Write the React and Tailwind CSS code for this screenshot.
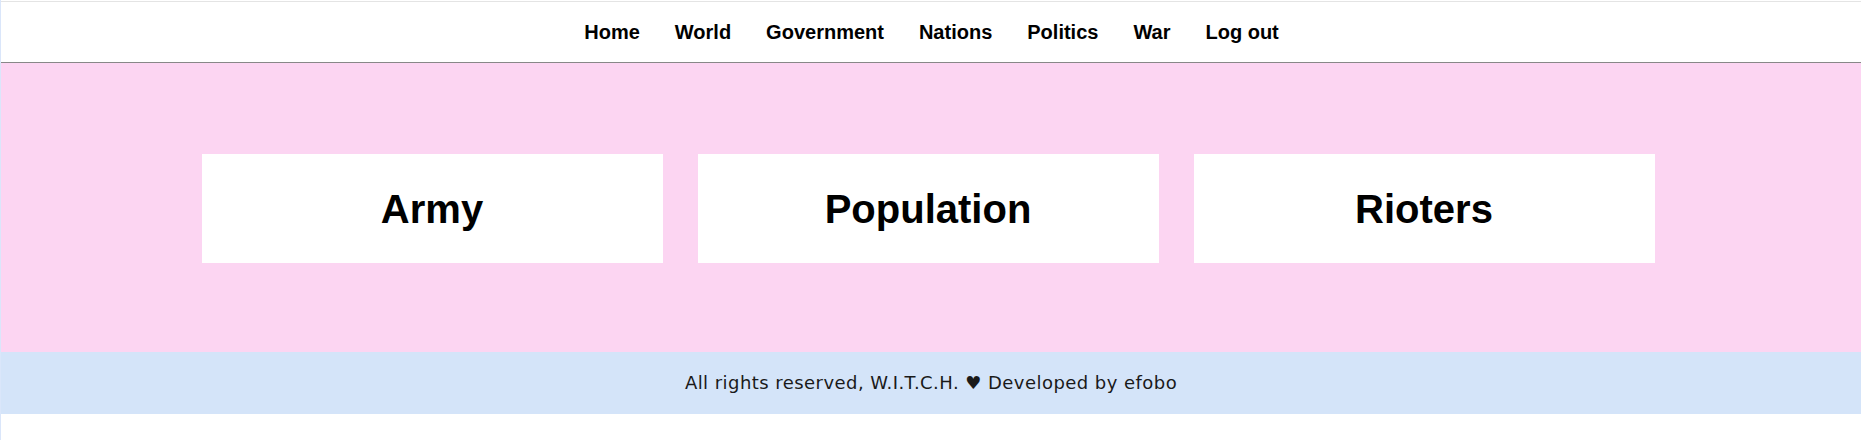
export default function App() {
  const links = ["Home", "World", "Government", "Nations", "Politics", "War", "Log out"];
  const cards = ["Army", "Population", "Rioters"];
  return (
    <div className="w-full bg-white border-l border-[#dae6fa]" style={{ minHeight: 440 }}>
      <div className="h-px bg-white" />
      <div className="h-px bg-[#e4e4e4]" />
      <nav className="h-[61px] border-b border-[#888888] bg-white flex items-center justify-center gap-[35px] pl-[1px] font-['Liberation_Sans',Arial,sans-serif] font-bold text-[20px] text-black">
        {links.map((l) => (
          <a key={l} className="leading-none cursor-pointer">
            {l}
          </a>
        ))}
      </nav>
      <main className="h-[289px] bg-[#fcd5f2] flex items-center justify-center gap-[35px] pr-[6px] pt-[2px]">
        {cards.map((c) => (
          <div
            key={c}
            className="w-[461px] h-[109px] bg-white flex items-center justify-center"
          >
            <h2 className="font-['Liberation_Sans',Arial,sans-serif] font-bold text-[40px] leading-none text-black">
              {c}
            </h2>
          </div>
        ))}
      </main>
      <footer className="h-[62px] bg-[#d4e4f9] flex items-center justify-center">
        <p className="font-['DejaVu_Sans',sans-serif] text-[18px] tracking-[0.45px] leading-none text-[#1a1a1a]">
          All rights reserved, W.I.T.C.H. ♥ Developed by efobo
        </p>
      </footer>
    </div>
  );
}
